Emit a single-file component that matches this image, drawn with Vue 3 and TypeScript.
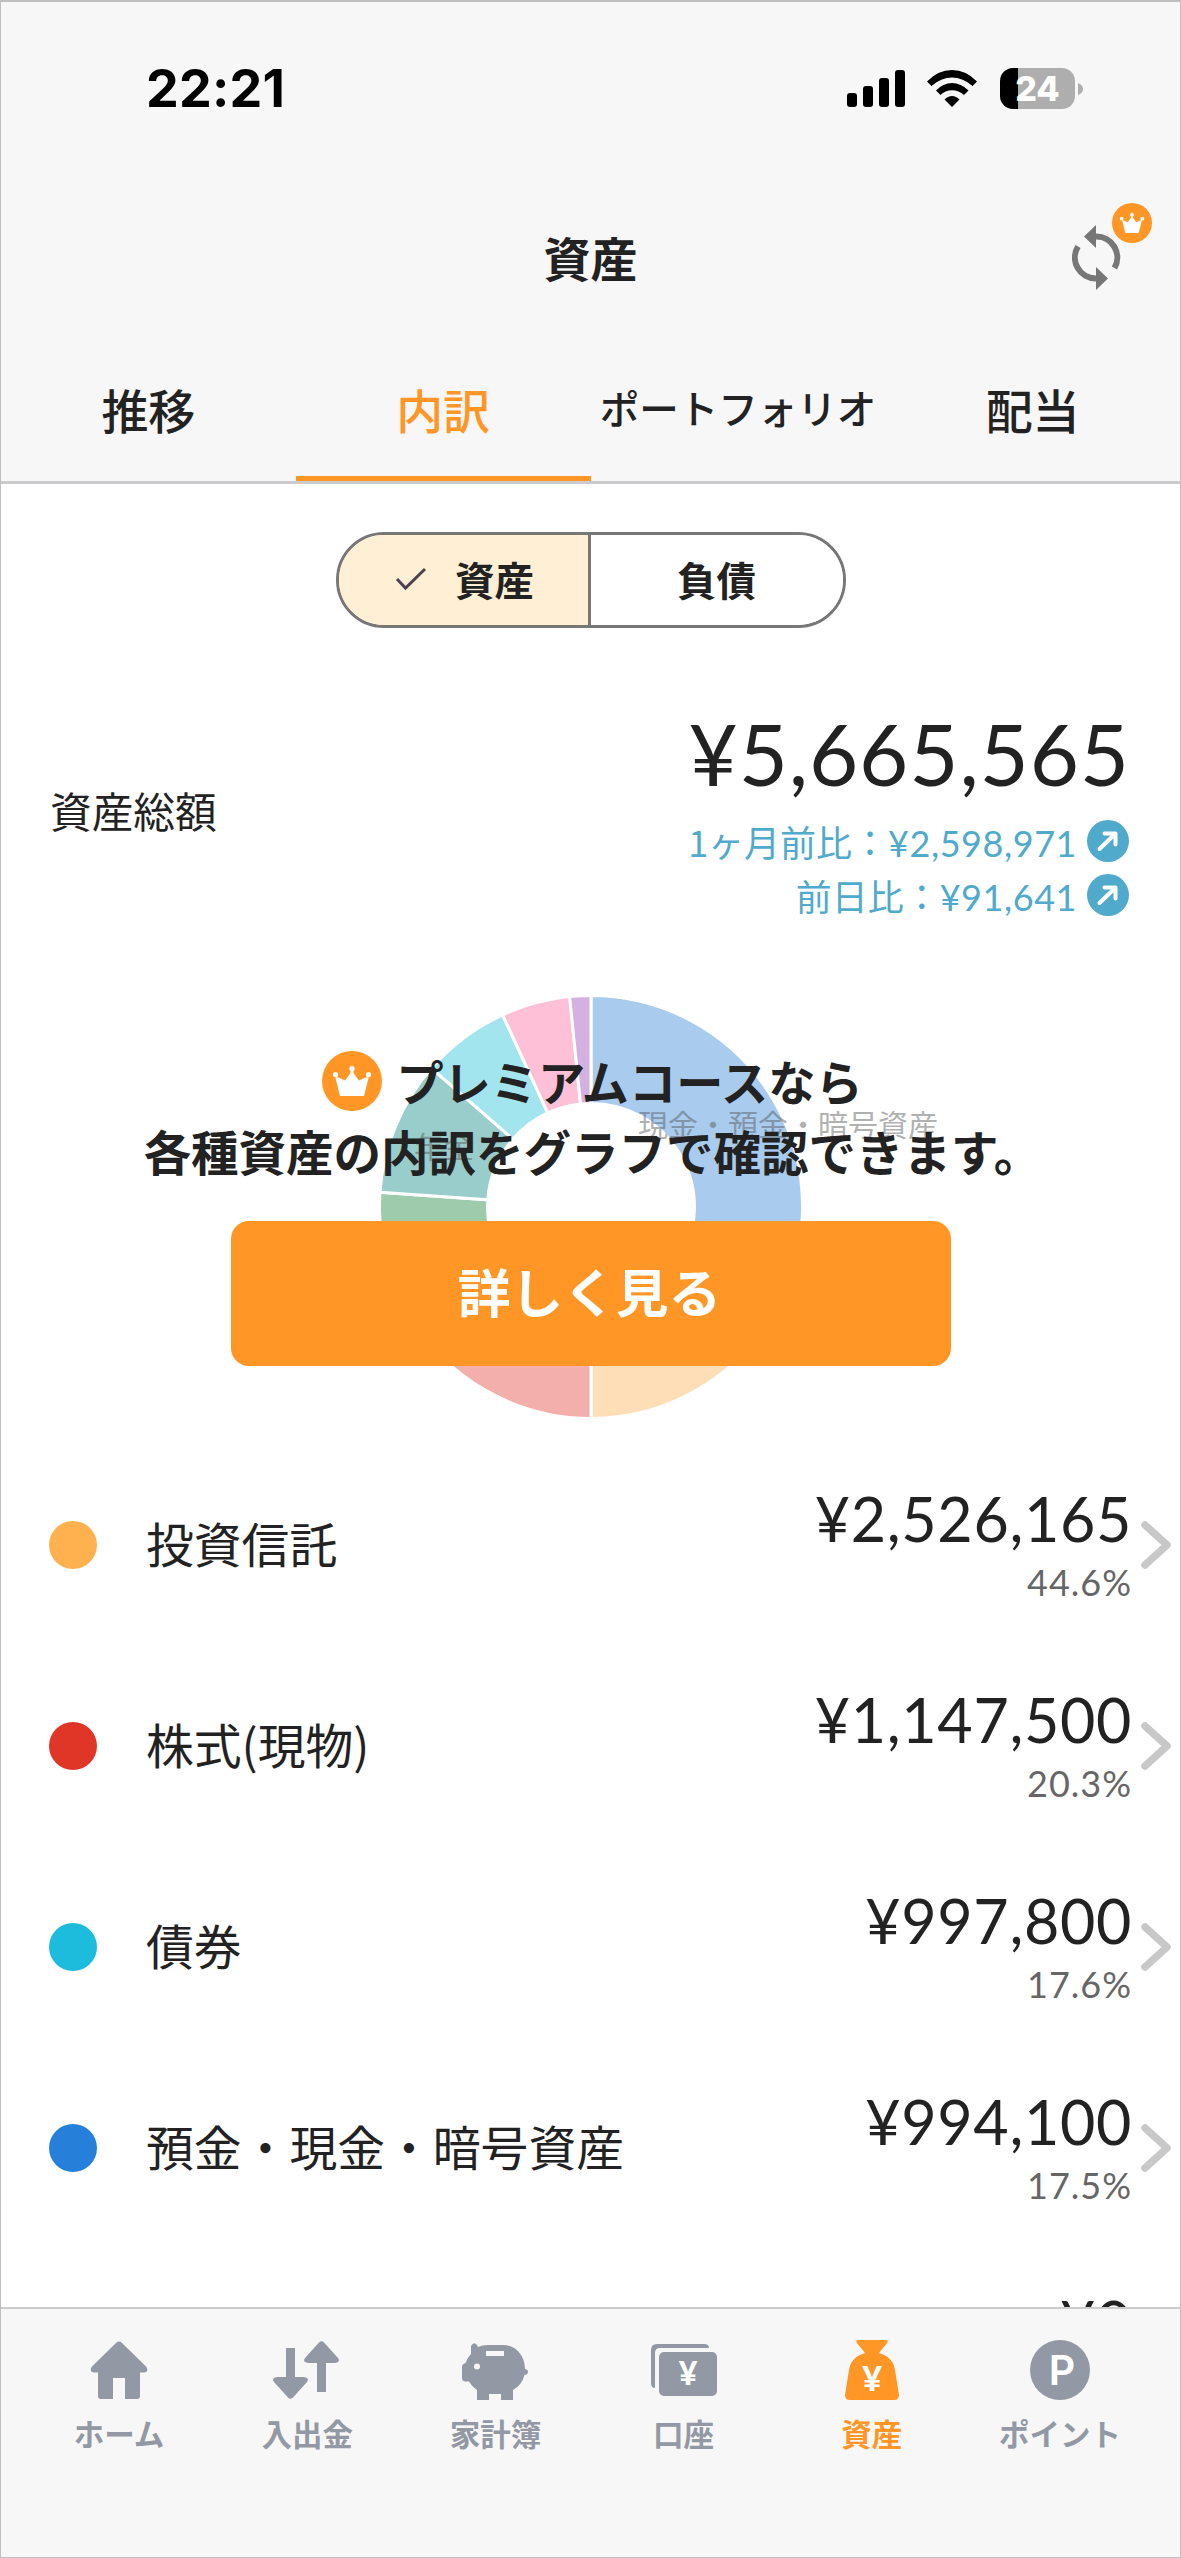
<script setup lang="ts">
interface Holding {
  name: string
  amount: string
  rate: string
  color: string
}

const tabs = ['推移', '内訳', 'ポートフォリオ', '配当']

const holdings: Holding[] = [
  { name: '投資信託', amount: '¥2,526,165', rate: '44.6%', color: '#ffb04f' },
  { name: '株式(現物)', amount: '¥1,147,500', rate: '20.3%', color: '#df3628' },
  { name: '債券', amount: '¥997,800', rate: '17.6%', color: '#1ebcdc' },
  { name: '預金・現金・暗号資産', amount: '¥994,100', rate: '17.5%', color: '#2680d9' },
  { name: '', amount: '¥0', rate: '', color: 'transparent' },
]

// Donut slices: clockwise start and end angles in degrees from the top.
const slices = [
  { from: 0, to: 120, color: '#a8cbee' },
  { from: 120, to: 180, color: '#fddeb6' },
  { from: 180, to: 240, color: '#f2afab' },
  { from: 240, to: 274, color: '#9dcbac' },
  { from: 274, to: 311, color: '#98cdcb' },
  { from: 311, to: 335.3, color: '#a3e5ef' },
  { from: 335.3, to: 354.2, color: '#fdc0d6' },
  { from: 354.2, to: 360, color: '#d4b1e1' },
]

function point(r: number, deg: number): string {
  const a = (deg * Math.PI) / 180
  return `${(213 + r * Math.sin(a)).toFixed(2)} ${(213 - r * Math.cos(a)).toFixed(2)}`
}

function slicePath(from: number, to: number): string {
  return `M${point(211.5, from)}A211.5 211.5 0 0 1 ${point(211.5, to)}L${point(103.5, to)}A103.5 103.5 0 0 0 ${point(103.5, from)}Z`
}
</script>

<template>
  <main class="screen">
    <header class="top">
      <div class="status">
        <span class="clock">22:21</span>
        <div class="indicators">
          <svg class="signal" width="58" height="37" viewBox="0 0 58 37">
            <rect x="0" y="23" width="10" height="14" rx="3" />
            <rect x="16" y="16" width="10" height="21" rx="3" />
            <rect x="32" y="8" width="10" height="29" rx="3" />
            <rect x="48" y="0" width="10" height="37" rx="3" />
          </svg>
          <svg class="wifi" width="50" height="37" viewBox="0 0 50 37">
            <path d="M0 11.500Q11 0 25 0T50 11.500L45.500 16Q36 7.500 25 7.500T4.500 16Z" />
            <path d="M9 20.500Q16 13 25 13T41.500 20.500L37 25Q32 20.300 25 20.300T13.500 25Z" />
            <path d="M17.500 29.500Q21 26 25 26T32.500 29.500L25 37Z" />
          </svg>
          <div class="battery"><span>24</span></div>
          <svg class="cap" width="5" height="12" viewBox="0 0 5 12"><path d="M0 0Q5 2 5 6T0 12Z" fill="#aeaeae" /></svg>
        </div>
      </div>
      <div class="title-bar">
        <h1>資産</h1>
        <div class="sync">
          <svg width="50" height="66" viewBox="0 0 50 66">
            <g fill="none" stroke="#777" stroke-width="6">
              <path d="M24 11.500A21 21 0 0 1 42.500 43" />
              <path d="M24 53.500A21 21 0 0 1 6 21.500" />
            </g>
            <path d="M24 0V23L12 11.500ZM24 42V65L36 53.500Z" fill="#777" />
          </svg>
          <svg class="sync-crown" width="40" height="40" viewBox="0 0 60 60">
            <circle cx="30" cy="30" r="30" fill="#ff9626" />
            <g fill="#fff">
              <path d="M20 45L15 25L23.500 29L28.500 22V18H31.500V22L36.500 29L45 25L40 45Z" />
              <circle cx="14.500" cy="23.500" r="2.800" /><circle cx="45.500" cy="23.500" r="2.800" /><circle cx="30" cy="17.500" r="2.800" />
            </g>
          </svg>
        </div>
      </div>
      <nav class="tabs">
        <a v-for="(t, i) in tabs" :key="t" :class="{ active: i === 1, long: i === 2 }">{{ t }}</a>
      </nav>
    </header>

    <section class="content">
      <div class="segment">
        <button class="on">
          <svg width="32" height="24" viewBox="0 0 32 24"><path d="M2 12L10.500 21L30 2" fill="none" stroke="#4c434e" stroke-width="3" /></svg>
          資産
        </button>
        <button>負債</button>
      </div>

      <div class="summary">
        <span class="summary-label">資産総額</span>
        <div class="summary-values">
          <div class="total">¥5,665,565</div>
          <div class="diff">
            <span>1ヶ月前比：<b>¥2,598,971</b></span>
            <svg width="42" height="42" viewBox="0 0 42 42"><circle cx="21" cy="21" r="21" fill="#4faacb" /><path d="M12.500 29L27 15M17.500 13.500H28.500V24.500" fill="none" stroke="#fff" stroke-width="4" stroke-linecap="round" stroke-linejoin="round" /></svg>
          </div>
          <div class="diff">
            <span>前日比：<b>¥91,641</b></span>
            <svg width="42" height="42" viewBox="0 0 42 42"><circle cx="21" cy="21" r="21" fill="#4faacb" /><path d="M12.500 29L27 15M17.500 13.500H28.500V24.500" fill="none" stroke="#fff" stroke-width="4" stroke-linecap="round" stroke-linejoin="round" /></svg>
          </div>
        </div>
      </div>

      <div class="chart">
        <svg class="donut" width="426" height="426" viewBox="0 0 426 426">
          <path v-for="s in slices" :key="s.from" :d="slicePath(s.from, s.to)" :fill="s.color" stroke="#fff" stroke-width="3" />
        </svg>
        <span class="slice-label cash">現金・預金・暗号資産</span>
        <span class="slice-label pension">年金</span>
        <div class="promo">
          <p class="promo-head">
            <svg width="60" height="60" viewBox="0 0 60 60">
              <circle cx="30" cy="30" r="30" fill="#ff9626" />
              <g fill="#fff">
                <path d="M18 45L13 25L23 29.500L28.500 22V18H31.500V22L37 29.500L47 25L42 45Z" />
                <circle cx="13.500" cy="23.500" r="2.600" /><circle cx="46.500" cy="23.500" r="2.600" /><circle cx="30" cy="17.500" r="2.600" />
              </g>
            </svg>
            <span>プレミアムコースなら</span>
          </p>
          <p class="promo-text">各種資産の内訳をグラフで確認できます。</p>
          <button class="cta">詳しく見る</button>
        </div>
      </div>

      <ul class="list">
        <li v-for="h in holdings" :key="h.amount">
          <i class="dot" :style="{ background: h.color }"></i>
          <span class="name">{{ h.name }}</span>
          <div class="figures">
            <span class="amount">{{ h.amount }}</span>
            <span class="rate">{{ h.rate }}</span>
          </div>
          <svg class="chevron" width="31" height="48" viewBox="0 0 31 48"><path d="M4 4L26 24L4 44" fill="none" stroke="#c8c8c8" stroke-width="7.500" stroke-linecap="round" stroke-linejoin="round" /></svg>
        </li>
      </ul>
    </section>

    <footer class="bottom">
      <a>
        <svg width="72" height="64" viewBox="0 0 72 64">
          <path d="M33.500 2.500Q36 .5 38.500 2.500L63.500 27Q66 32 61 32.500H57V56Q57 59 54 59H42V38H30V59H18Q15 59 15 56V32.500H11Q6 32 8.500 27Z" fill="currentColor" />
        </svg>
        ホーム
      </a>
      <a>
        <svg width="72" height="64" viewBox="0 0 72 64" fill="currentColor">
          <path d="M15 8H24V37H33Q39 38 36 42L22 57.500Q19.500 60 17 57.500L3 42Q0 38 6 37H15ZM46 52H55V23H64Q70 22 67 18L53 2.500Q50.500 0 48 2.500L34 18Q31 22 37 23H46Z" />
        </svg>
        入出金
      </a>
      <a>
        <svg width="72" height="64" viewBox="0 0 72 64">
          <path d="M12 14V6Q15 1 18 5L19 7Q23 5 29 5H44C57 5 66 16 66 29Q69 29 69 32.500Q68 35 65.500 35Q63 45 54 50V60H42V54H30V60H18V50Q13 47 10 41.500H6Q3 41 3 38V27Q3 24 6.500 23Q8 18 12 14Z" fill="currentColor" />
          <path d="M27 11H45V16H27Z" fill="#f7f7f7" />
          <circle cx="18" cy="26.500" r="3" fill="#f7f7f7" />
        </svg>
        家計簿
      </a>
      <a>
        <svg width="72" height="64" viewBox="0 0 72 64">
          <path d="M3 10Q3 4 9 4H56Q61 4 61 8H12Q7 8 7 13V48Q3 48 3 43Z" fill="currentColor" />
          <rect x="11" y="12" width="58" height="44" rx="5" fill="currentColor" />
          <text x="40" y="45" class="yen" font-size="32">¥</text>
        </svg>
        口座
      </a>
      <a class="current">
        <svg width="72" height="64" viewBox="0 0 72 64">
          <path d="M22 0H50Q53 0 51 3L43 13Q57 17 59 30L63 55Q63 60 58 60H14Q9 60 9 55L13 30Q15 17 29 13L21 3Q19 0 22 0Z" fill="currentColor" />
          <text x="36" y="51" class="yen" font-size="34">¥</text>
        </svg>
        資産
      </a>
      <a>
        <svg width="72" height="64" viewBox="0 0 72 64">
          <circle cx="36" cy="30" r="30" fill="currentColor" />
          <text x="38" y="45" class="parking" font-size="41">P</text>
        </svg>
        ポイント
      </a>
    </footer>
  </main>
</template>

<style>
body { margin: 0; background: #fff; }
</style>

<style scoped>
* { box-sizing: border-box; }
.screen { width: 1181px; height: 2558px; border: 1px solid #bfbfbf; border-top-width: 2px; background: #fff; color: #222; font-family: "Noto Sans CJK JP", sans-serif; display: flex; flex-direction: column; overflow: hidden; }
.top { height: 482px; flex: none; background: #f7f7f7; border-bottom: 3px solid #cbcbcd; display: flex; flex-direction: column; }
.status { height: 175px; padding: 0 97px 0 145px; display: flex; align-items: center; justify-content: space-between; }
.clock { font: 700 52px/60px Inter, sans-serif; letter-spacing: 0.2px; color: #000; padding-top: 1px; }
.indicators { display: flex; align-items: center; }
.wifi { margin: 0 23px 0 22px; }
.battery { width: 75px; height: 41px; border-radius: 13px; background: linear-gradient(90deg, #000 18px, #aeaeae 18px); color: #fff; display: flex; align-items: center; justify-content: center; font: 800 34px/41px Inter, sans-serif; }
.cap { margin-left: 3px; }
.title-bar { height: 168px; position: relative; display: flex; justify-content: center; align-items: center; padding-bottom: 4px; }
h1 { margin: 0; font-size: 47px; font-weight: 700; line-height: 60px; }
.sync { position: absolute; right: 58px; top: 50px; display: flex; }
.sync-crown { position: absolute; left: 40px; top: -24px; }
.tabs { flex: 1; display: flex; }
.tabs a { width: 25%; height: 139px; border-bottom: 5px solid transparent; display: flex; justify-content: center; align-items: center; font-size: 47px; font-weight: 500; padding-bottom: 2px; }
.tabs .active { color: #ff9626; border-color: #ff9626; }
.tabs .long { font-size: 39.500px; padding-bottom: 5px; white-space: nowrap; }
.content { flex: 1; min-height: 0; overflow: hidden; display: flex; flex-direction: column; }
.segment { flex: none; width: 510px; height: 96px; margin: 48px auto 0; border: 3px solid #777; border-radius: 48px; display: flex; overflow: hidden; }
.segment button { width: 50%; border: 0; background: #fff; color: #222; font: 700 39.500px/56px "Noto Sans CJK JP", sans-serif; padding: 0 0 3px; display: flex; align-items: center; justify-content: center; }
.segment .on { background: #fff0d5; border-right: 3px solid #777; gap: 28px; padding-left: 3px; }
.summary { flex: none; height: 341px; padding: 75px 51px 0 49px; display: flex; justify-content: space-between; }
.summary-label { font-size: 41.700px; line-height: 60px; margin-top: 77px; }
.summary-values { display: flex; flex-direction: column; align-items: flex-end; }
.total { font: 400 85px/100px Lato, sans-serif; letter-spacing: .85px; height: 111px; margin-right: -1px; }
.diff { height: 54px; display: flex; align-items: center; gap: 10px; color: #4faacb; font-size: 36px; line-height: 50px; }
.diff span { padding-top: 1px; }
.diff b { font: 400 36px/50px Lato, sans-serif; letter-spacing: .55px; }
.chart { flex: none; height: 475px; position: relative; }
.donut { position: absolute; left: 377px; top: 25px; }
.slice-label { position: absolute; font-size: 30px; line-height: 36px; color: #555; opacity: .45; }
.cash { left: 637px; top: 136px; }
.pension { left: 413px; top: 158px; }
.promo { position: relative; display: flex; flex-direction: column; align-items: center; padding-top: 77px; }
.promo p { margin: 0; font-size: 47.500px; font-weight: 700; line-height: 70px; white-space: nowrap; }
.promo-head { display: flex; align-items: center; gap: 14px; padding-left: 4px; }
.promo .promo-head { font-size: 47.200px; }
.promo-text { padding-left: 4px; }
.cta { width: 720px; height: 145px; margin-top: 35px; border: 0; border-radius: 18px; background: #ff9626; color: #fff; font: 700 52.700px/80px "Noto Sans CJK JP", sans-serif; padding: 0 2px 8px 0; }
.list { list-style: none; margin: 0; padding: 0; }
.list li { height: 201px; display: flex; align-items: center; padding: 0 8px 0 48px; }
.dot { width: 48px; height: 48px; border-radius: 50%; }
.name { margin-left: 49px; font-size: 47.800px; line-height: 70px; flex: 1; padding-bottom: 4px; }
.figures { display: flex; flex-direction: column; align-items: flex-end; width: 400px; }
.amount { font: 400 61px/72px Lato, sans-serif; letter-spacing: .65px; }
.rate { font: 400 36px/54px Lato, sans-serif; letter-spacing: 1px; height: 52px; color: #666; }
.chevron { margin-left: 9px; }
.bottom { flex: none; height: 250px; border-top: 2px solid #ccc; background: #f7f7f7; padding: 31px 26px 0 24px; display: flex; }
.bottom a { flex: 1; display: flex; flex-direction: column; align-items: center; font-size: 30.500px; line-height: 44px; font-weight: 700; color: #9299a4; gap: 7px; white-space: nowrap; }
.bottom .current { color: #ff9626; }
.yen { fill: #fff; font-family: Lato, sans-serif; font-weight: 900; text-anchor: middle; }
.parking { fill: #fff; font-family: Inter, sans-serif; font-weight: 600; text-anchor: middle; }
.sync-crown { top: -22px; }
</style>
